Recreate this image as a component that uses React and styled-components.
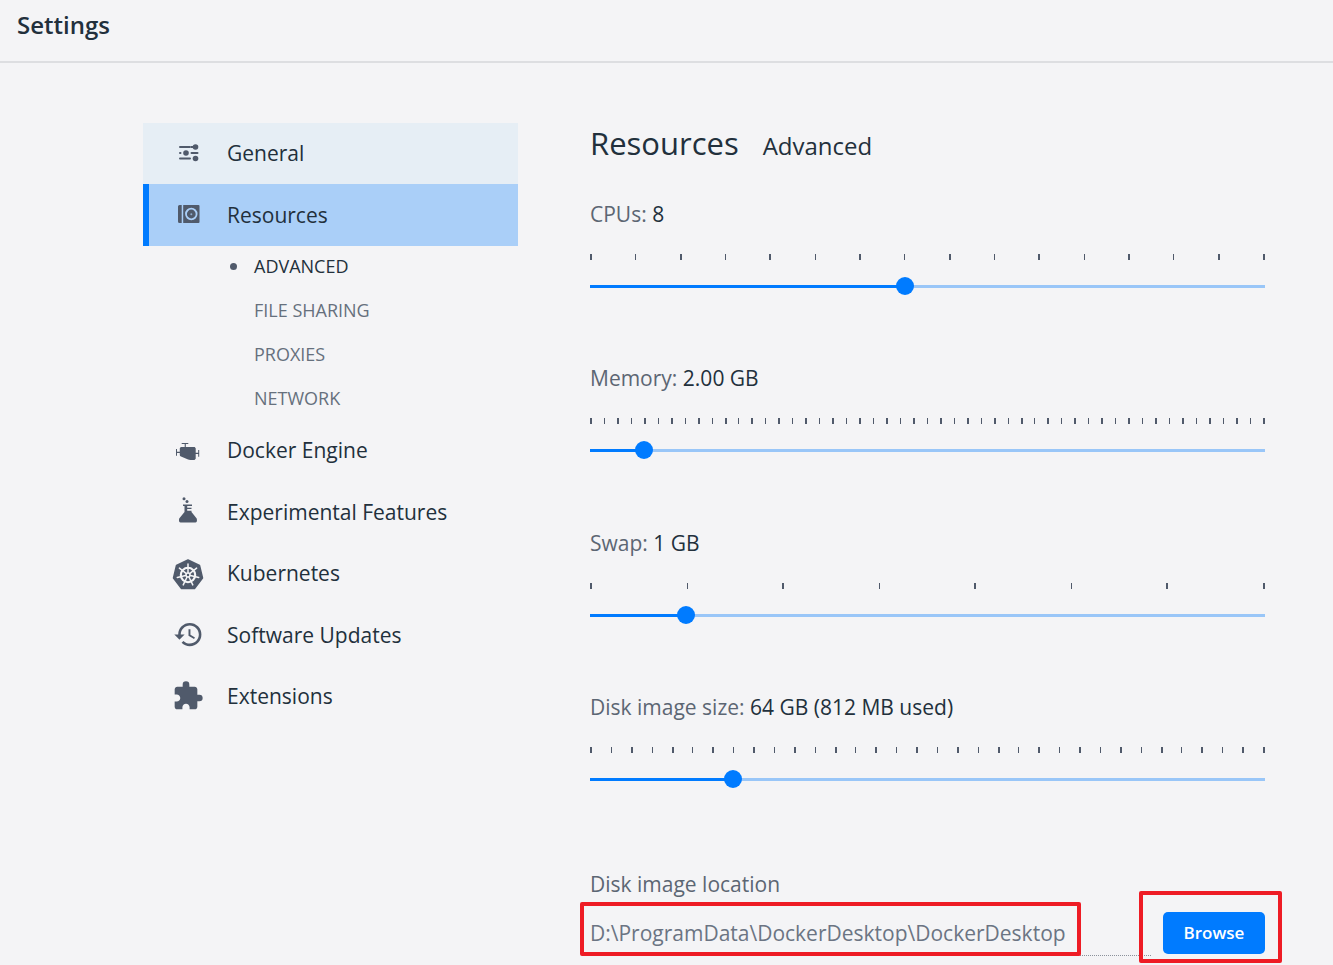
import React, { useState } from "react";
import styled, { createGlobalStyle } from "styled-components";
import { MdHistory, MdExtension } from "react-icons/md";

const GlobalStyle = createGlobalStyle`
  * { box-sizing: border-box; }
  body {
    margin: 0;
    background: #f4f4f6;
    color: #22303c;
    font-family: "Open Sans", "Noto Sans", sans-serif;
    font-size: 21px;
    line-height: 28px;
  }
  h1, h2, ul { margin: 0; padding: 0; }
  ul { list-style: none; }
`;

const Page = styled.div`
  min-height: 100vh;
`;

const Header = styled.header`
  height: 63px;
  padding: 9px 17px;
  border-bottom: 2px solid #dddee1;
`;

const Title = styled.h1`
  font-size: 24px;
  line-height: 32px;
  font-weight: 600;
`;

const Body = styled.div`
  display: grid;
  grid-template-columns: minmax(0, 375px) minmax(0, 1fr);
  gap: 72px;
  padding: 60px 68px 0 143px;
`;

const NavItem = styled.li`
  & > a { height: 61px; }
  &:nth-child(even) > a { height: 62px; }
`;

const NavLink = styled.a`
  display: flex;
  align-items: center;
  gap: 23px;
  padding-bottom: 1px;
  padding-left: ${(p) => (p.$active ? 23 : 29)}px;
  border-left: ${(p) => (p.$active ? "6px solid #007bff" : "0")};
  background: ${(p) => (p.$active ? "#aacff8" : p.$hover ? "#e6eef5" : "transparent")};
  color: inherit;
  text-decoration: none;
`;

const IconSlot = styled.span`
  display: flex;
  justify-content: center;
  width: 32px;
  color: #505a6b;
`;

const SubList = styled.ul`
  display: flex;
  flex-direction: column;
  gap: 4px;
  && { padding: 0 0 2px; }
`;

const SubLink = styled.a`
  display: flex;
  align-items: center;
  gap: 17px;
  height: 40px;
  padding-left: 87px;
  font-size: 18px;
  color: ${(p) => (p.$active ? "#22303c" : "#66707d")};
  text-decoration: none;

  &::before {
    content: "";
    width: 7px;
    height: 7px;
    border-radius: 50%;
    background: ${(p) => (p.$active ? "#505a6b" : "transparent")};
  }
`;

const Heading = styled.div`
  display: flex;
  align-items: baseline;
  gap: 24px;
  height: 77px;
`;

const SectionTitle = styled.h2`
  font-size: 31px;
  line-height: 40px;
  font-weight: 400;
`;

const SectionSub = styled.span`
  font-size: 24px;
`;

const Field = styled.div`
  display: flex;
  flex-direction: column;
  padding-bottom: 69px;
  &:nth-of-type(odd) { padding-bottom: 70px; }
`;

const Label = styled.label`
  color: #5c6673;
`;

const Value = styled.span`
  color: #22303c;
`;

const Ticks = styled.div`
  display: flex;
  justify-content: space-between;
  height: 6px;
  margin-top: 26px;
`;

const Tick = styled.span`
  width: 2px;
  background: #505a6b;
  &:nth-child(even):not(:last-child) { width: 1px; }
`;

const Range = styled.input`
  appearance: none;
  width: calc(100% + 18px);
  height: 18px;
  margin: 17px -9px 0;
  background:
    linear-gradient(#007bff, #007bff) 9px center / calc((100% - 18px) * var(--fill)) 3px no-repeat,
    linear-gradient(#99c6f8, #99c6f8) center / calc(100% - 18px) 3px no-repeat;

  &::-webkit-slider-thumb {
    appearance: none;
    width: 18px;
    height: 18px;
    border-radius: 50%;
    background: #007bff;
  }
`;

const Location = styled.div`
  display: flex;
  flex-direction: column;
  padding-top: 12px;
`;

const LocationRow = styled.div`
  display: flex;
  gap: 12px;
  margin-top: 13px;
`;

const PathBox = styled.div`
  position: relative;
  flex: 1;
`;

const PathInput = styled.input`
  width: 100%;
  height: 45px;
  padding: 0;
  border: 0;
  border-bottom: 1px dotted #8b919b;
  background: transparent;
  color: #6b7483;
  font: inherit;
`;

const BrowseBox = styled.div`
  position: relative;
`;

const BrowseButton = styled.button`
  width: 102px;
  height: 42px;
  margin-top: 1px;
  border: 0;
  border-radius: 5px;
  background: #007bff;
  color: #fff;
  font: 600 17px/24px "Open Sans", "Noto Sans", sans-serif;
`;

const Marker = styled.span`
  position: absolute;
  inset: ${(p) => p.$inset};
  border: 4px solid #ee1c25;
  border-radius: 2px;
  pointer-events: none;
`;

const GeneralIcon = () => (
  <svg width="22" height="18" viewBox="-2 0 22 18" fill="currentColor" aria-hidden="true">
    <rect x="0" y="2" width="12" height="2" rx="1" />
    <rect x="12" y="2" width="4" height="2" />
    <circle cx="16.5" cy="3" r="2.8" />
    <rect x="0" y="8" width="2.5" height="2" rx="1" />
    <circle cx="7" cy="9" r="2.8" />
    <rect x="11.5" y="8" width="8" height="2" rx="1" />
    <rect x="0" y="13.5" width="12" height="2" rx="1" />
    <circle cx="16.5" cy="14.5" r="2.8" />
  </svg>
);

const ResourcesIcon = () => (
  <svg width="24" height="20" viewBox="-2 0 24 20" aria-hidden="true">
    <path d="M1.5 0H3.700v18H1.5Q0 18 0 16.500V1.500Q0 0 1.500 0zM5.200 0H20.500Q21.500 0 21.500 1V17Q21.500 18 20.500 18H5.200z" fill="currentColor" />
    <circle cx="13.300" cy="9" r="5.300" fill="none" stroke="#aacff8" strokeWidth="1.800" />
    <circle cx="13.300" cy="9.300" r="1" fill="#aacff8" opacity=".7" />
  </svg>
);

const EngineIcon = () => (
  <svg width="24" height="22" viewBox="0 -4 24 22" fill="currentColor" aria-hidden="true">
    <path d="M5.700 0h6.600v1H9.800v3H18.700l1 1.200V9.700h2.500V7h1v6.700h-1V11h-2.500v4.800L18.500 17H14.500q-1.500 0-3-.8L5 13.500q-1.200-.5-1.200-1.500V10H1v2.700H0V6h1v2.700h2.800V5.200L4.800 4h3.900V1h-3z" />
  </svg>
);

const FlaskIcon = () => (
  <svg width="20" height="29" viewBox="0 0 20 29" fill="currentColor" aria-hidden="true">
    <circle cx="6" cy="1.700" r="1.500" />
    <circle cx="9" cy="4.500" r="1.500" />
    <path d="M5 7.500h9V9H9.200v1.700H13.500v1.300H9.200v1.700H13.500V15L18.700 21.500Q19.600 25.500 17.500 25.500H2.500Q.400 25.500 1.200 21.500L6.500 15V9H5z" />
  </svg>
);

const SPOKES = [0, 1, 2, 3, 4, 5, 6].map((i) => (i * 360) / 7);

const KubernetesIcon = () => (
  <svg width="32" height="33" viewBox="0 -2 32 33" aria-hidden="true">
    <path
      d="M16 1 27.500 6.500 30.500 19 22.500 29.500H9.500L1.500 19 4.500 6.500z"
      fill="currentColor"
      stroke="currentColor"
      strokeWidth="1.500"
      strokeLinejoin="round"
    />
    <g fill="none" stroke="#f4f4f6" strokeLinecap="round">
      <circle cx="16" cy="16" r="7.200" strokeWidth="2.100" />
      {SPOKES.map((a) => (
        <path key={a} d="M16 13.500V5" strokeWidth="1.500" transform={`rotate(${a} 16 16)`} />
      ))}
      <circle cx="16" cy="16" r="2" strokeWidth="1.500" />
    </g>
  </svg>
);

const NAV = [
  { name: "General", icon: <GeneralIcon />, hover: true },
  {
    name: "Resources",
    icon: <ResourcesIcon />,
    active: true,
    children: ["ADVANCED", "FILE SHARING", "PROXIES", "NETWORK"],
  },
  { name: "Docker Engine", icon: <EngineIcon /> },
  { name: "Experimental Features", icon: <FlaskIcon /> },
  { name: "Kubernetes", icon: <KubernetesIcon /> },
  { name: "Software Updates", icon: <MdHistory size={31} /> },
  { name: "Extensions", icon: <MdExtension size={32} /> },
];

const SLIDERS = [
  { id: "cpus", label: "CPUs:", min: 1, max: 16, step: 1, start: 8, ticks: 16, format: (v) => `${v}` },
  { id: "memory", label: "Memory:", min: 0, max: 25, step: 0.5, start: 2, ticks: 51, format: (v) => `${v.toFixed(2)} GB` },
  { id: "swap", label: "Swap:", min: 0, max: 7, step: 1, start: 1, ticks: 8, format: (v) => `${v} GB` },
  { id: "disk", label: "Disk image size:", min: 8, max: 272, step: 8, start: 64, ticks: 34, format: (v) => `${v} GB (812 MB used)` },
];

function SliderField({ id, label, min, max, step, start, ticks, format }) {
  const [value, setValue] = useState(start);
  return (
    <Field>
      <Label htmlFor={id}>
        {label} <Value>{format(value)}</Value>
      </Label>
      <Ticks aria-hidden="true">
        {Array.from({ length: ticks }, (_, i) => (
          <Tick key={i} />
        ))}
      </Ticks>
      <Range
        id={id}
        type="range"
        min={min}
        max={max}
        step={step}
        value={value}
        onChange={(e) => setValue(Number(e.target.value))}
        style={{ "--fill": (value - min) / (max - min) }}
      />
    </Field>
  );
}

export default function App() {
  return (
    <Page>
      <GlobalStyle />
      <Header>
        <Title>Settings</Title>
      </Header>
      <Body>
        <nav>
          <ul>
            {NAV.map((item) => (
              <NavItem key={item.name}>
                <NavLink href="#" $active={item.active} $hover={item.hover}>
                  <IconSlot>{item.icon}</IconSlot>
                  {item.name}
                </NavLink>
                {item.children && (
                  <SubList>
                    {item.children.map((child, i) => (
                      <li key={child}>
                        <SubLink href="#" $active={i === 0}>{child}</SubLink>
                      </li>
                    ))}
                  </SubList>
                )}
              </NavItem>
            ))}
          </ul>
        </nav>
        <main>
          <Heading>
            <SectionTitle>Resources</SectionTitle>
            <SectionSub>Advanced</SectionSub>
          </Heading>
          {SLIDERS.map((s) => (
            <SliderField key={s.id} {...s} />
          ))}
          <Location>
            <Label htmlFor="location">Disk image location</Label>
            <LocationRow>
              <PathBox>
                <PathInput id="location" readOnly value="D:\ProgramData\DockerDesktop\DockerDesktop" />
                <Marker $inset="-9px 70px 0 -10px" />
              </PathBox>
              <BrowseBox>
                <BrowseButton type="button">Browse</BrowseButton>
                <Marker $inset="-20px -17px -7px -24px" />
              </BrowseBox>
            </LocationRow>
          </Location>
        </main>
      </Body>
    </Page>
  );
}
